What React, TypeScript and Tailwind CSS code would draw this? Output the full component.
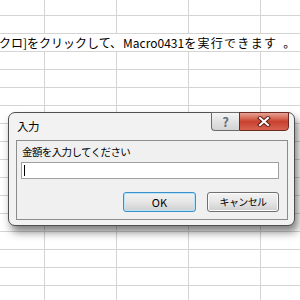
import React from "react";

// ─── Sheet grid ───────────────────────────────────────────────────────────────

const FONT = { fontFamily: '"Noto Sans CJK JP", "Noto Sans", sans-serif' };
const ROWS = 17;
const TEXT_ROW = 2;

function Cells() {
  return (
    <>
      <div className="w-[45px] shrink-0 border-r border-[#d4d4d4]" />
      <div className="w-[72px] shrink-0 border-r border-[#d4d4d4]" />
      <div className="w-[72px] shrink-0 border-r border-[#d4d4d4]" />
      <div className="w-[72px] shrink-0 border-r border-[#d4d4d4]" />
      <div className="flex-1" />
    </>
  );
}

function Sheet() {
  return (
    <div className="flex flex-col">
      {Array.from({ length: ROWS }).map((_, i) => (
        <div
          key={i}
          className={`flex border-b border-[#d4d4d4] ${i === 0 ? "h-[16px]" : "h-[18px]"}`}
        >
          {i === TEXT_ROW ? (
            <div className="flex-1 overflow-hidden whitespace-nowrap text-[12px] leading-[17px] text-black">
              <span className="ml-[-1px]">クロ]をクリックして、</span>
              <span className="ml-[1px]">Macro0431</span>
              <span className="tracking-[1.3px]">を実行できます</span>
              <span className="ml-[6px]">。</span>
            </div>
          ) : (
            <Cells />
          )}
        </div>
      ))}
    </div>
  );
}

// ─── Dialog ───────────────────────────────────────────────────────────────────

function CaptionButtons() {
  return (
    <div className="absolute top-[-1px] right-[5px] flex h-[19px]">
      <div className="w-[28px] flex items-center justify-center rounded-bl-[4px] border border-r-0 border-[#6b6b6b] bg-gradient-to-b from-[#f4f4f4] via-[#e2e2e2] to-[#d4d4d4]">
        <span className="text-[13px] font-bold leading-none text-[#66717c]">?</span>
      </div>
      <div className="w-[50px] flex items-center justify-center rounded-br-[4px] border border-[#6b2a22] bg-gradient-to-b from-[#e6a193] via-[#c8412f] to-[#d8624f]">
        <svg width="14" height="11" viewBox="0 0 14 11">
          <path d="M3 2 L11 9 M11 2 L3 9" stroke="#5c1d14" strokeWidth="4" strokeLinecap="square" />
          <path d="M3 2 L11 9 M11 2 L3 9" stroke="#ffffff" strokeWidth="2" strokeLinecap="square" />
        </svg>
      </div>
    </div>
  );
}

function Dialog() {
  return (
    <div className="absolute left-[8px] top-[112px] w-[287px] h-[114px] rounded-[7px] border border-[#4f4f4f] bg-[#f2f2f2] shadow-[3px_6px_9px_rgba(0,0,0,0.5)]">
      <CaptionButtons />
      <div className="h-[27px] pl-[8px] pt-[6px] text-[11.5px] leading-[14px] tracking-[-0.5px] text-black">入力</div>
      <div className="ml-[7px] w-[272px] h-[80px] border border-[#8c8c8c] bg-[#f0f0f0]">
        <div className="pl-[5px] pt-[4px] text-[10.5px] leading-[14px] tracking-[-0.6px] text-black">
          金額を入力してください
        </div>
        <div className="ml-[4px] mt-[3px] w-[258px] h-[17px] border border-[#a0a0a0] bg-white relative">
          <div className="absolute left-[2px] top-[2px] w-[1px] h-[11px] bg-black" />
        </div>
        <div className="mt-[13px] flex justify-end gap-[11px] pr-[8px]">
          <button className="w-[73px] h-[20px] rounded-[3px] border border-[#3c8fc8] shadow-[inset_0_0_0_1px_#b6e4f8] bg-gradient-to-b from-[#f3f3f3] via-[#e6e6e6] to-[#cfcfcf] text-[11px] leading-none text-black">
            OK
          </button>
          <button className="w-[72px] h-[20px] rounded-[3px] border border-[#707070] shadow-[inset_0_0_0_1px_#fbfbfb] bg-gradient-to-b from-[#f3f3f3] via-[#e6e6e6] to-[#cfcfcf] text-[10px] leading-none tracking-[-0.6px] text-black">
            キャンセル
          </button>
        </div>
      </div>
    </div>
  );
}

// ─── Main ─────────────────────────────────────────────────────────────────────

export default function App() {
  return (
    <div className="relative w-[300px] h-[300px] overflow-hidden bg-white" style={FONT}>
      <Sheet />
      <Dialog />
    </div>
  );
}
